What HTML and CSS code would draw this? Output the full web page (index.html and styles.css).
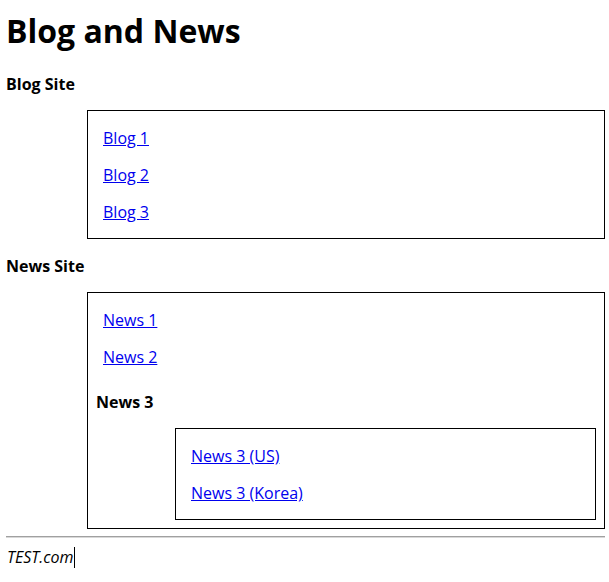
FILE: index.html
```html
<!DOCTYPE html>
<html lang="en">
<head>
<meta charset="utf-8">
<title>Blog and News</title>
<link rel="stylesheet" href="styles.css">
</head>
<body>
<h1 class="title">Blog and News</h1>
<dl class="sites">
  <dt class="site-name">Blog Site</dt>
  <dd class="box">
    <a class="link" href="#">Blog 1</a>
    <a class="link" href="#">Blog 2</a>
    <a class="link" href="#">Blog 3</a>
  </dd>
  <dt class="site-name">News Site</dt>
  <dd class="box">
    <a class="link" href="#">News 1</a>
    <a class="link" href="#">News 2</a>
    <dl class="sub">
      <dt class="site-name">News 3</dt>
      <dd class="box box-inner">
        <a class="link" href="#">News 3 (US)</a>
        <a class="link" href="#">News 3 (Korea)</a>
      </dd>
    </dl>
  </dd>
</dl>
<hr class="rule">
<footer class="footer"><span class="domain">TEST.com</span><span class="caret"></span></footer>
</body>
</html>
```
FILE: styles.css
```css
html, body {
  background: #ffffff;
}
body {
  margin: 0 4px 0 6px;
  font-family: "Open Sans", "Noto Sans CJK KR", sans-serif;
  font-size: 16px;
  line-height: 21px;
  color: #000000;
}
.title {
  margin: 9px 0 0;
  font-size: 32px;
  line-height: 43px;
  font-weight: 700;
}
.sites {
  margin: 22px 0 0;
}
.site-name {
  font-weight: 700;
  margin: 0;
}
.sites > .site-name + .box {
  margin-top: 15px;
}
.sites > .box + .site-name {
  margin-top: 17px;
}
.box {
  margin: 0 0 0 81px;
  border: 1px solid #000000;
  padding: 8px;
  display: flex;
  flex-direction: column;
  align-items: flex-start;
}
.link {
  margin: 9px 7px 7px;
  color: #0000ee;
  text-decoration: underline;
}
.sub {
  margin: 17px 0 0;
  align-self: stretch;
}
.sub .site-name {
  margin-bottom: 15px;
}
.box-inner {
  margin-left: 79px;
}
.rule {
  margin: 7px 0 0;
  border: 0;
  border-top: 1px solid #a0a0a0;
  border-bottom: 1px solid #d8d8d8;
  height: 0;
}
.footer {
  margin-top: 9px;
  padding-left: 1px;
  font-style: italic;
  line-height: 21px;
  display: flex;
  align-items: flex-start;
}
.caret {
  display: inline-block;
  width: 1px;
  height: 21px;
  background: #000000;
}
```
